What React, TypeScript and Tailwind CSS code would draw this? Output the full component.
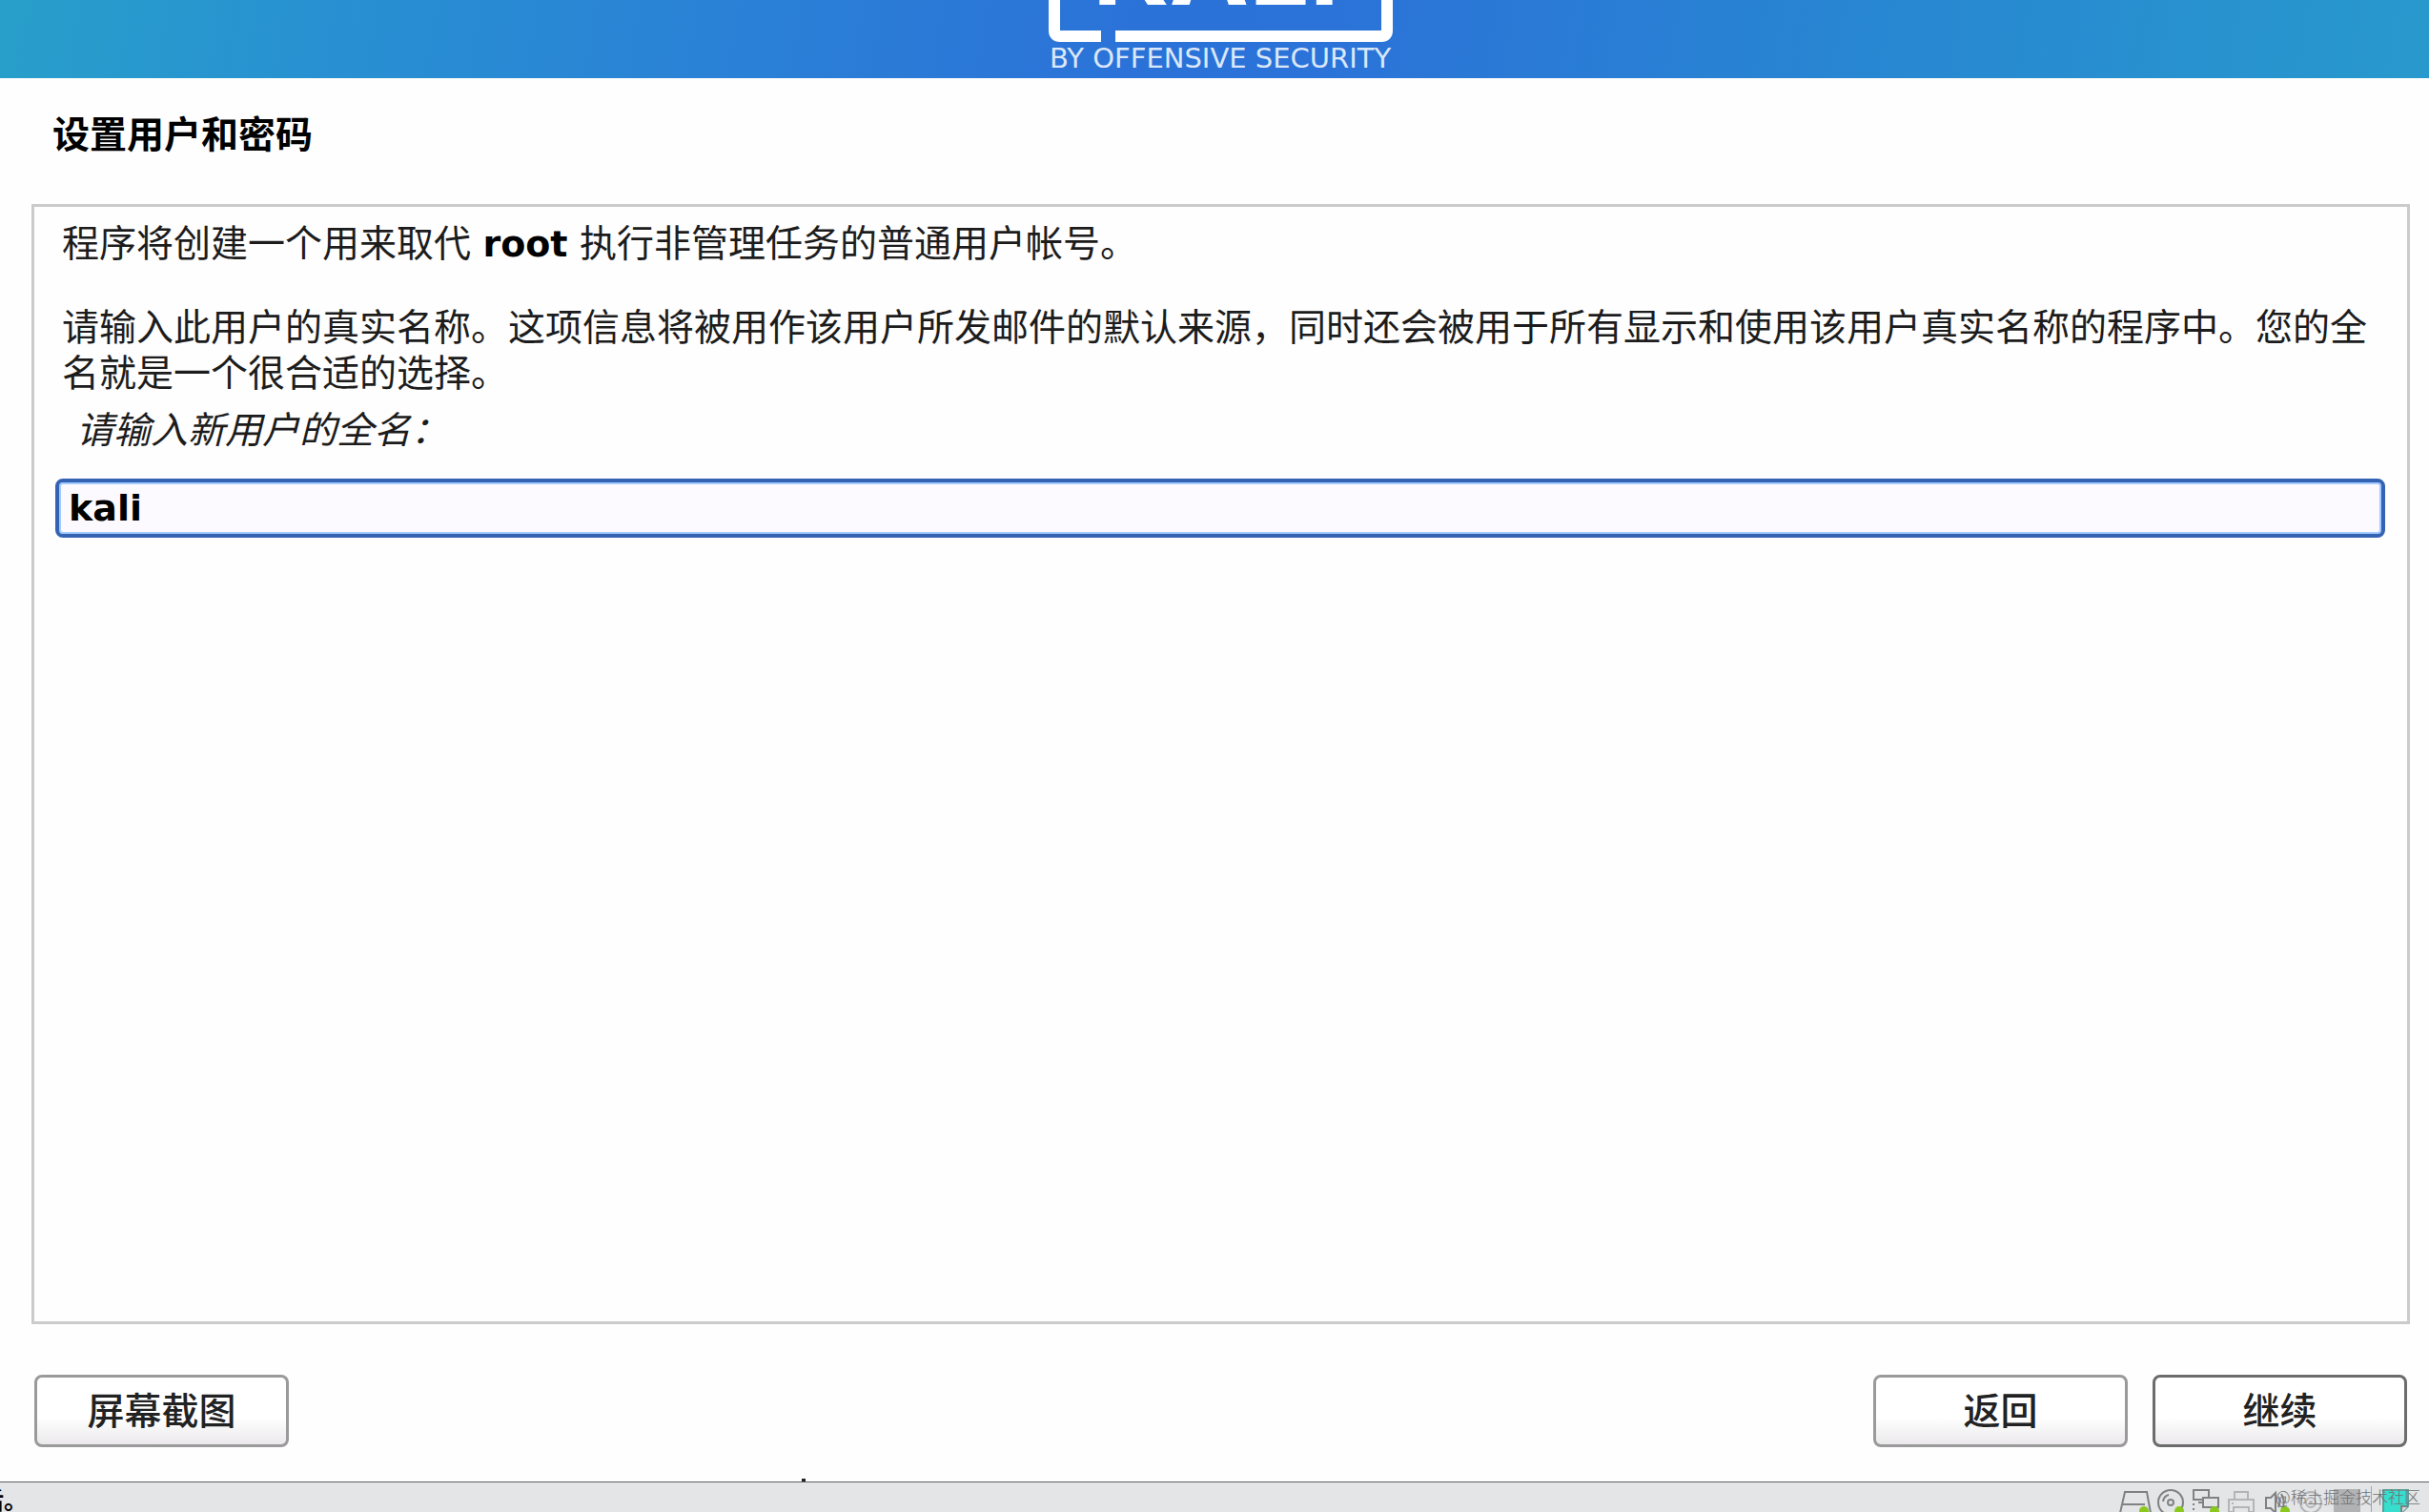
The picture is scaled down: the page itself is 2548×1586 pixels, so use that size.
import React, { useState } from "react";

const Logo = () => {
    return (
        <svg className="w-[362px] h-[82px]" viewBox="0 0 362 82" aria-hidden="true">
            <text x="46" y="5" fontSize="112" fontWeight="700" fontFamily="Inter, sans-serif" fill="#fff">KALI</text>
            <path d="M6 0V32Q6 38 12 38H55" fill="none" stroke="#fff" strokeWidth="12" />
            <path d="M70 38H349Q355 38 355 32V0" fill="none" stroke="#fff" strokeWidth="12" />
            <text x="1" y="71" fontSize="29" fontFamily="'DejaVu Sans', sans-serif" fill="#dbe8fa">BY OFFENSIVE SECURITY</text>
        </svg>
    )
}

// green dot = device is connected
const DeviceIcon = ({ active, muted, children }: { active?: boolean, muted?: boolean, children: React.ReactNode }) => {
    return (
        <svg className="w-[37px] h-8" viewBox="0 0 37 32" fill="none" stroke={muted ? "#b3b4b5" : "#7f8182"} strokeWidth="2" aria-hidden="true">
            {children}
            {active && <circle cx="28" cy="30" r="5" fill="#8bc81e" stroke="none" />}
        </svg>
    )
}

const StatusBar = () => {
    return (
        <footer className="relative flex justify-between h-8 overflow-hidden border-t border-[#5f6062] bg-[#e3e5e7] pr-4">
            <p className="-ml-[21px] mt-1 text-[25px] leading-8 font-bold text-black">后。</p>

            <div className="flex">
                <DeviceIcon active>
                    <path d="M3 32L8 10H31L35 32M5 23H29" />
                </DeviceIcon>
                <DeviceIcon active>
                    <circle cx="19" cy="21" r="13" />
                    <circle cx="19" cy="21" r="3" />
                    <path d="M11 20Q12 14 17 13" />
                </DeviceIcon>
                <DeviceIcon active>
                    <path d="M15 18H6V8H22V15" />
                    <path d="M16 16H32V26H16Z" />
                    <path d="M11 21H16" />
                    <path d="M6 22V32" strokeDasharray="2 3" />
                </DeviceIcon>
                <DeviceIcon muted>
                    <path d="M12 17V10H26V17" />
                    <path d="M11 31H6V18H32V31H27M11 32V26H27V32M9 22H11" />
                </DeviceIcon>
                <DeviceIcon active>
                    <path d="M8 16H13L18 11V32L13 27H8Z" />
                    <path d="M21 15Q24 20 21 26M24 12Q29 20 25 28" />
                </DeviceIcon>
                <DeviceIcon muted>
                    <circle cx="18" cy="21" r="11" />
                    <circle cx="18" cy="21" r="5" />
                    <circle cx="18" cy="21" r="1" />
                </DeviceIcon>
                <DeviceIcon muted>
                    <path d="M5 7H33V32H5Z" fill="#b1b2b3" stroke="none" />
                </DeviceIcon>
                <div className="mx-[7px] mt-1 w-px bg-[#a3a5a7]"></div>
                <DeviceIcon>
                    <path d="M5 8H31V25L24 32H5Z" fill="#36dfcd" stroke="#5f9d98" />
                    <path d="M24 32V25H31" fill="#d5dada" />
                </DeviceIcon>
            </div>

            {/* watermark */}
            <span className="absolute right-[9px] top-1 text-[17px] leading-6 font-light text-[#707173]">@稀土掘金技术社区</span>
        </footer>
    )
}

const btnStyle = "w-[267px] h-[76px] rounded-lg border-3 bg-linear-to-b from-white from-60% to-[#ebe9eb] pt-[2px] text-[39px] leading-12 font-medium text-[#222]"

const App = () => {
    const [fullName, setFullName] = useState("kali")

    return (
        <div className="relative min-h-screen flex flex-col bg-[#fefefe] text-[#1c1c1c] font-['DejaVu_Sans','Noto_Sans_CJK_SC',sans-serif]">
            {/* banner */}
            <header className="flex justify-center h-[82px] pl-[33px] pr-5 bg-[linear-gradient(100deg,#289fca_0%,#2890d2_14%,#2a81d6_30%,#2b72d8_47%,#2b73d8_55%,#2886d2_76%,#2899cd_100%)]">
                <Logo />
            </header>

            <main className="flex-1 flex flex-col pl-[33px] pr-5 pt-9 pb-9">
                <h1 className="pl-[22px] text-[39px] leading-12 font-bold text-black">设置用户和密码</h1>

                <section className="flex-1 mt-12 border-3 border-[#cbcbcb] pl-[22px] pr-[23px] pt-[15px]">
                    <div className="pl-[7px] text-[39px] leading-12">
                        <p>程序将创建一个用来取代 <b className="text-[38px] text-black">root</b> 执行非管理任务的普通用户帐号。</p>
                        <p className="mt-10">请输入此用户的真实名称。这项信息将被用作该用户所发邮件的默认来源，同时还会被用于所有显示和使用该用户真实名称的程序中。您的全名就是一个很合适的选择。</p>
                        <label htmlFor="fullname" className="block mt-3 pl-[15px] italic">请输入新用户的全名：</label>
                    </div>
                    <input
                    id="fullname"
                    type="text"
                    value={fullName}
                    onChange={(e)=>{
                        setFullName(e.target.value)
                    }}
                    className="block w-full h-[62px] mt-[26px] px-[10px] rounded-lg border-4 border-[#3463b4] bg-[#fcfaff] shadow-[inset_0_0_0_2px_#a3cbff] outline-none text-[38px] leading-12 font-bold text-black" />
                </section>

                <div className="flex justify-between mt-[53px] px-[3px]">
                    <button className={btnStyle + " border-[#9a9a9a]"}>屏幕截图</button>
                    <div className="flex gap-[26px]">
                        <button className={btnStyle + " border-[#9a9a9a]"}>返回</button>
                        <button className={btnStyle + " border-[#6c6c6c]"}>继续</button>
                    </div>
                </div>
            </main>

            {/* speck over the edge of the status bar */}
            <i className="absolute left-[33%] bottom-8 w-1 h-[3px] bg-[#222]"></i>

            <StatusBar />
        </div>
    )
}

export default App
